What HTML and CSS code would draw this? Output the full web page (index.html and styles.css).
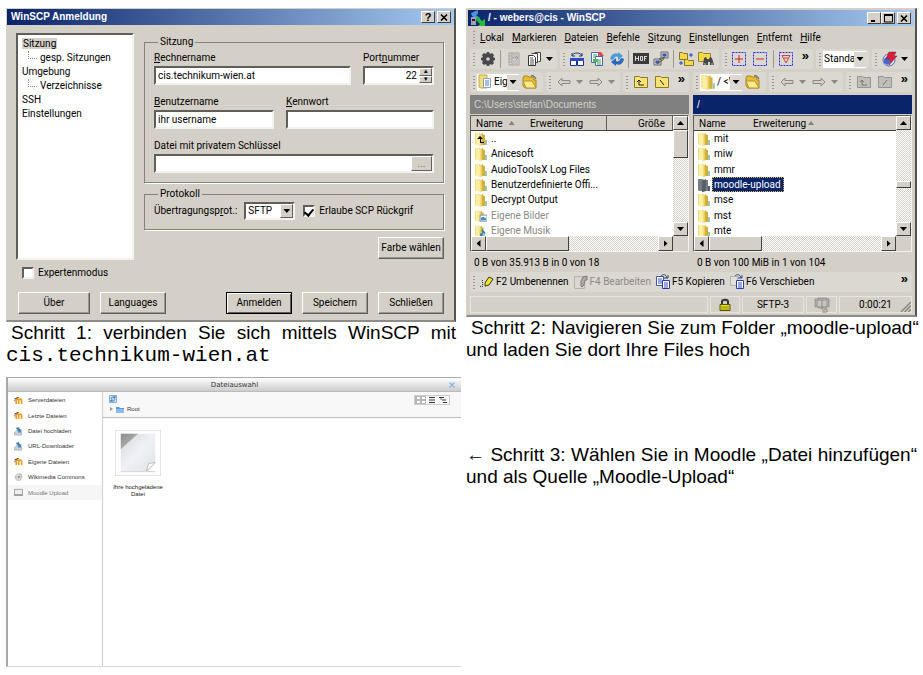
FILE: index.html
```
<!DOCTYPE html>
<html lang="de">
<head>
<meta charset="utf-8">
<title>WinSCP und Moodle-Upload</title>
<link rel="stylesheet" href="styles.css">
</head>
<body>
<svg class="defs" aria-hidden="true">
  <defs>
    <linearGradient id="gold" x1="0" x2="1"><stop offset="0" stop-color="#fdf3b4"/><stop offset=".6" stop-color="#ecd05e"/><stop offset="1" stop-color="#c9a63c"/></linearGradient>
    <linearGradient id="paper" x1="0" y1="0" x2="1" y2="1"><stop offset="0" stop-color="#d5d8de"/><stop offset=".5" stop-color="#eff1f5"/><stop offset="1" stop-color="#dde1e9"/></linearGradient>
    <linearGradient id="fold" x1="0" y1="0" x2="1" y2="1"><stop offset="0" stop-color="#8c8c8c"/><stop offset="1" stop-color="#c4c4c4"/></linearGradient>
  </defs>
  <symbol id="folder" viewBox="0 0 12 14"><path d="M0 1h5l1 1h3v11H1L0 12z" fill="#f3dd78"/><path d="M1 1h3v12H1z" fill="#fbeea6"/><path d="M4 3l4-2v12l-3 1H4z" fill="url(#gold)"/><path d="M8 3h2v10H8z" fill="#cfae3c"/><path d="M10 8h2v5h-2z" fill="#9cc9a8"/></symbol>
  <symbol id="folder-sel" viewBox="0 0 12 14"><path d="M0 1h5l1 1h4v11H1L0 12z" fill="#777d80"/><path d="M4 3l4-2v12l-3 1H4z" fill="#586168"/><path d="M10 8h2v5h-2z" fill="#426380"/></symbol>
  <symbol id="up" viewBox="0 0 12 14"><use href="#folder"/><path d="M5 4l3 3H6v3h3v1H5V7H2z" fill="#000"/></symbol>
  <symbol id="pics" viewBox="0 0 14 14"><use href="#folder" width="12" height="14"/><path d="M6 6h8v7H6z" fill="#fff" stroke="#789"/><path d="M7 9l3-1 3 2v2H7z" fill="#3a8fc8"/></symbol>
  <symbol id="music" viewBox="0 0 14 14"><use href="#folder" width="12" height="14"/><path d="M8 4c1 3 5 3 4 7-1-2-2-2-3-2v4H6v-3h2z" fill="#1d7fd8"/></symbol>
  <symbol id="gear" viewBox="0 0 16 16"><path d="M7 1h2l1 2 2-1 2 2-1 2 2 1v2l-2 1 1 2-2 2-2-1-1 2H7l-1-2-2 1-2-2 1-2-2-1V7l2-1-1-2 2-2 2 1z" fill="#484848"/><circle cx="8" cy="8" r="1.800" fill="#d8d4cc"/></symbol>
  <symbol id="queue" viewBox="0 0 16 16"><path d="M3 2h10v12H3zM6 2v12M3 5h3M3 8h3M3 11h3" fill="none" stroke="#a5a29c"/><path d="M7 4h5M7 6h5M7 10h5M7 12h5" stroke="#aaa"/><path d="M6 7h6l-2-2M12 7l-2 2" fill="none" stroke="#999"/></symbol>
  <symbol id="docs" viewBox="0 0 16 16"><path d="M7.500 1.500h6v9h-2" fill="#fff" stroke="#444"/><path d="M4.500 2.500h6v9h-2" fill="#fff" stroke="#444"/><path d="M1.500 4.500h5l2 2v8h-7z" fill="#fff" stroke="#333"/><path d="M3 7h3M3 9h4M3 11h4M3 13h4" stroke="#555"/></symbol>
  <symbol id="sync-win" viewBox="0 0 16 16"><path d="M1.500 8.500h6v6h-6zM8.500 8.500h6v6h-6z" fill="#fff" stroke="#1d2f86"/><path d="M1 7h7v3H1zM8 7h7v3H8z" fill="#2b4bc8"/><path d="M3 5c1-4 9-4 10 0M3 2v3h3M13 2v3h-3" fill="none" stroke="#26346e"/></symbol>
  <symbol id="compare" viewBox="0 0 16 16"><path d="M2.500 1.500h7v10h-7z" fill="#fff" stroke="#456fa8"/><path d="M6.500 5.500h7v9h-7z" fill="#fff" stroke="#4463a8"/><path d="M4 4h4M4 6h2M8 9h4M8 11h4M8 13h4" stroke="#3b9a52"/><path d="M8 1h4l3 4h-4z" fill="#e3434c"/><path d="M4 8h5v3H4z" fill="#4cb75c"/></symbol>
  <symbol id="refresh" viewBox="0 0 16 16"><path d="M1 8c1-5 5-7 8-5V1l5 4-5 4V6C7 5 5 6 5 8l-2 1z" fill="#4b9bdc"/><path d="M15 8c-1 5-5 7-8 5v2l-5-4 5-4v3c2 1 4 0 4-2l2-1z" fill="#2869bc"/></symbol>
  <symbol id="console" viewBox="0 0 16 16"><path d="M0 2h16v11H0z" fill="#3b3b3b"/><path d="M2.500 5v5M2 7.500h4M5.500 5v5M7.500 5.500h2v4h-2zM11.500 5v5M11 5.500h3M11 7.500h2" fill="none" stroke="#ddd"/></symbol>
  <symbol id="putty" viewBox="0 0 16 16"><path d="M8 1h7v6H8zM1 8h7v6H1z" fill="#d8d8d8" stroke="#67676f"/><path d="M9.500 2.500h4v3h-4zM2.500 9.500h4v3h-4z" fill="#3b55a8"/><path d="M12 6L6 8l3 1-5 4 7-5-2-1z" fill="#f5de26" stroke="#665"/></symbol>
  <symbol id="folders-sync" viewBox="0 0 16 16"><path d="M1.500 1.500h3l1 1h4v6h-8zM6.500 8.500h3l1 1h5v5h-9z" fill="#f3d84c" stroke="#8b7426"/><path d="M11 4h4M13 2v4M1 12h4M3 10v4" stroke="#2746b8"/></symbol>
  <symbol id="find" viewBox="0 0 16 16"><path d="M.5 1.500h4l1 1h7v8H.5z" fill="#f3d84c" stroke="#9b842c"/><path d="M6 7l2-1 1 2h2l1-2 2 1 2 7h-4v-3h-2v3H5z" fill="#484848"/><path d="M6 13h2M13 13h2" stroke="#bbb"/></symbol>
  <symbol id="sel-add" viewBox="0 0 16 16"><path d="M1.500 1.500h13v13h-13z" fill="none" stroke="#2b2bd8" stroke-dasharray="2 1"/><path d="M4 8h8M8 4v8" stroke="#c22"/></symbol>
  <symbol id="sel-sub" viewBox="0 0 16 16"><path d="M1.500 1.500h13v13h-13z" fill="none" stroke="#2b2bd8" stroke-dasharray="2 1"/><path d="M4 8h8" stroke="#c22"/></symbol>
  <symbol id="sel-filter" viewBox="0 0 16 16"><path d="M1.500 1.500h13v13h-13z" fill="none" stroke="#2b2bd8" stroke-dasharray="2 1"/><path d="M4 4.500h8L8 12zM6 7h4" fill="none" stroke="#c44"/></symbol>
  <symbol id="globe" viewBox="0 0 16 16"><circle cx="7" cy="9" r="6" fill="#d5dcec" stroke="#5f6fb0"/><path d="M2 8l4-3 3 4-3 5-4-2z" fill="#4469c8"/><path d="M7 1h7l-2 4h3l-8 9 2-6H4z" fill="#d6213c" stroke="#8c1730" stroke-width=".5"/></symbol>
  <symbol id="open" viewBox="0 0 16 16"><path d="M1 4l1-2h4l1 1h5v3h2v8H3L1 12z" fill="#e4bd35" stroke="#a6872c"/><path d="M1 7h9l4 7H4z" fill="#fbe98b" stroke="#b5932e"/><path d="M9 2c3-1 4 1 5 3" fill="none" stroke="#444"/></symbol>
  <symbol id="arrow-l" viewBox="0 0 16 16"><path d="M2 8l4-4v2.500h8v3H6V12z" fill="#d4d0c8" stroke="#8d8a84"/></symbol>
  <symbol id="arrow-r" viewBox="0 0 16 16"><path d="M14 8l-4-4v2.500H2v3h8V12z" fill="#d4d0c8" stroke="#8d8a84"/></symbol>
  <symbol id="parent" viewBox="0 0 16 16"><path d="M1.500 2.500h5l1 1h7v10h-13z" fill="#f7e273" stroke="#8e762d"/><path d="M6 6l-2 2M6 6l2 2M6 6v5h5" fill="none" stroke="#222"/></symbol>
  <symbol id="root" viewBox="0 0 16 16"><path d="M1.500 2.500h5l1 1h7v10h-13z" fill="#f7e273" stroke="#8e762d"/><path d="M6 6l4 5" fill="none" stroke="#222"/></symbol>
  <symbol id="parent-off" viewBox="0 0 16 16"><path d="M1.500 2.500h5l1 1h7v10h-13z" fill="#c0beb9" stroke="#96938d"/><path d="M6 6l-2 2M6 6l2 2M6 6v5h5" fill="none" stroke="#777"/></symbol>
  <symbol id="root-off" viewBox="0 0 16 16"><path d="M1.500 2.500h5l1 1h7v10h-13z" fill="#c0beb9" stroke="#96938d"/><path d="M10 6l-4 5" fill="none" stroke="#777"/></symbol>
  <symbol id="docfolder" viewBox="0 0 14 16"><path d="M1 1h8v13H3L1 13z" fill="#f3da7a" stroke="#c8a545"/><path d="M5.500 4.500h7v9h-7z" fill="#f4f8fc" stroke="#8ba6c4"/><path d="M7 7h4M7 9h4M7 11h4" stroke="#5b8bbd"/></symbol>
  <symbol id="pencil" viewBox="0 0 16 16"><path d="M6 9l4-6 4 2-4 6-4 1z" fill="#f5e529" stroke="#33331a"/><path d="M3.500 6v8M1 12.500h2" stroke="#333" stroke-dasharray="1 1"/></symbol>
  <symbol id="edit-off" viewBox="0 0 16 16"><path d="M1.500 2.500h10v12h-10z" fill="#d9d6d0" stroke="#b5b2ac"/><path d="M8 12l0-5 2-4 4-1v4h-2l-1 5-2 2z" fill="#b0ada7" stroke="#7d7a75"/></symbol>
  <symbol id="copy" viewBox="0 0 16 16"><path d="M1.500 2.500h7v9h-7z" fill="#fff" stroke="#4055a5"/><path d="M7.500 6.500h7v8h-7z" fill="#fff" stroke="#2c3cae"/><path d="M3 5h4M3 7h4M3 9h4M9 9h4M9 11h4M9 13h4" stroke="#3550b5"/><path d="M6 2c2-2 5-2 6 2M9 4h4V1" fill="none" stroke="#26497c"/></symbol>
  <symbol id="move" viewBox="0 0 16 16"><path d="M1.500 2.500h7v9h-7z" fill="#e3e1dc" stroke="#888" stroke-dasharray="1 1"/><path d="M7.500 6.500h7v8h-7z" fill="#fff" stroke="#2c3cae"/><path d="M9 9h4M9 11h4M9 13h4" stroke="#3550b5"/><path d="M6 2c2-2 5-2 6 2M9 4h4V1" fill="none" stroke="#26497c"/></symbol>
  <symbol id="lock" viewBox="0 0 12 14"><path d="M3 7V4c0-3 6-3 6 0v3" fill="none" stroke="#333" stroke-width="2"/><path d="M1 6.500h10v6H1z" fill="#e8e11d" stroke="#55520f"/><path d="M2 9h8M2 11h8" stroke="#8e8a14"/></symbol>
  <symbol id="zip" viewBox="0 0 16 16"><path d="M1 2h3V1h9v1h2v8h-3v1H4v-1H1z" fill="#aaa8a3" stroke="#83817c" stroke-width=".6"/><path d="M4 4h8v5H4z" fill="#c9c6c0"/><path d="M8 3v8c0 3 3 3 3 1h2v3H8" fill="none" stroke="#8a8883"/></symbol>
  <symbol id="winscp" viewBox="0 0 16 16"><path d="M1 3l7-3v4L6 5l4 3v3L2 6z" fill="#4c94dd"/><path d="M1 7h5v8H1z" fill="#9aa4b0"/><path d="M2 9h3v2H2z" fill="#405"/><path d="M7 6l5 5 3-2v7H8l2-2-4-4z" fill="#25ba37"/></symbol>
  <symbol id="moodle" viewBox="0 0 10 10"><path d="M0 3l4-2 2 1-4 2z" fill="#4a4a4a"/><path d="M1 4v2" stroke="#555"/><path d="M2.500 9V4.500c0-1.500 2.800-1.500 2.800 0V9M5.300 5c0-2 3.200-2 3.200 0v4" fill="none" stroke="#f09a1c" stroke-width="1.800"/></symbol>
  <symbol id="upload" viewBox="0 0 10 10"><path d="M1.500 6l1-2h5l1 2v3H.5V6z" fill="#cdd3da" stroke="#8794a3" stroke-width=".6"/><path d="M2 1l3-1 2 3 1-1v4H4l1-1z" fill="#4583b8"/></symbol>
  <symbol id="commons" viewBox="0 0 10 10"><path d="M3 1h5l1 3-2 4H3L1 5z" fill="#d3d3d3" stroke="#999" stroke-width=".6"/><path d="M4 3l3 1-2 3z" fill="#8d8d8d"/><path d="M2 2l4 1M3 7l4-1" stroke="#fff" stroke-width=".7"/></symbol>
  <symbol id="drive" viewBox="0 0 10 10"><path d="M.5 1.500h9v6h-9z" fill="#eee" stroke="#999"/><path d="M0 8h10" stroke="#777"/></symbol>
</svg>

<main class="page">
  <section class="step">
    <div class="window login">
      <header class="titlebar">
        <h2>WinSCP Anmeldung</h2>
        <button class="cap" aria-label="Hilfe">?</button>
        <button class="cap close" aria-label="Schließen"><svg viewBox="0 0 9 9"><path d="M1 1.500l6 6M7 1.500l-6 6" stroke="#000" stroke-width="1.600"/></svg></button>
      </header>
      <form class="login-body">
        <div class="login-main">
          <ul class="tree">
            <li><span class="active">Sitzung</span></li>
            <li class="sub">gesp. Sitzungen</li>
            <li>Umgebung</li>
            <li class="sub">Verzeichnisse</li>
            <li>SSH</li>
            <li>Einstellungen</li>
          </ul>
          <div class="settings">
            <fieldset class="session">
              <legend>Sitzung</legend>
              <div class="fields">
                <div class="field grow"><label for="host"><u>R</u>echnername</label><input id="host" type="text" value="cis.technikum-wien.at"></div>
                <div class="field port"><label for="port">Port<u>n</u>ummer</label>
                  <div class="sunken"><input id="port" type="text" value="22"><span class="spin"><button type="button" aria-label="Mehr">▴</button><button type="button" aria-label="Weniger">▾</button></span></div>
                </div>
              </div>
              <div class="fields">
                <div class="field grow"><label for="user"><u>B</u>enutzername</label><input id="user" type="text" value="ihr username"></div>
                <div class="field pass"><label for="pass"><u>K</u>ennwort</label><input id="pass" type="password"></div>
              </div>
              <div class="fields">
                <div class="field grow"><label for="key">Datei mit privatem Schlüssel</label>
                  <div class="sunken"><input id="key" type="text"><button class="browse" type="button">...</button></div>
                </div>
              </div>
            </fieldset>
            <fieldset class="protocol">
              <legend>Protokoll</legend>
              <div class="proto-row">
                <label for="proto">Übertragungsp<u>r</u>ot.:</label>
                <span class="drop"><select id="proto"><option>SFTP</option></select><i></i></span>
                <input type="checkbox" id="scp" checked><label for="scp">Erlaube SCP Rückgrif</label>
              </div>
            </fieldset>
            <button class="btn color" type="button">Farbe wählen</button>
          </div>
        </div>
        <div class="expert"><input type="checkbox" id="expert"><label for="expert">Expertenmodus</label></div>
        <div class="actions">
          <button class="btn wide" type="button">Über</button>
          <button class="btn" type="button">Languages</button>
          <button class="btn default" type="button">Anmelden</button>
          <button class="btn" type="button">Speichern</button>
          <button class="btn" type="button">Schließen</button>
        </div>
      </form>
    </div>
    <p class="caption spread">Schritt 1: verbinden Sie sich mittels WinSCP mit <code>cis.technikum-wien.at</code></p>
  </section>

  <section class="step">
    <div class="window commander">
      <header class="titlebar">
        <svg class="ic"><use href="#winscp"/></svg>
        <h2>/ - webers@cis - WinSCP</h2>
        <button class="cap" aria-label="Minimieren"><svg viewBox="0 0 9 9"><path d="M1 7h4" stroke="#000" stroke-width="2"/></svg></button>
        <button class="cap" aria-label="Maximieren"><svg viewBox="0 0 9 9"><path d="M.5 1h8v7h-8z" fill="none" stroke="#000"/><path d="M0 1h9" stroke="#000" stroke-width="2"/></svg></button>
        <button class="cap close" aria-label="Schließen"><svg viewBox="0 0 9 9"><path d="M1 1.500l6 6M7 1.500l-6 6" stroke="#000" stroke-width="1.600"/></svg></button>
      </header>
      <nav class="menu">
        <i class="grip"></i>
        <a href="#"><u>L</u>okal</a><a href="#"><u>M</u>arkieren</a><a href="#"><u>D</u>ateien</a><a href="#"><u>B</u>efehle</a><a href="#"><u>S</u>itzung</a><a href="#"><u>E</u>instellungen</a><a href="#"><u>E</u>ntfernt</a><a href="#"><u>H</u>ilfe</a>
      </nav>
      <div class="bar">
        <div class="group">
          <i class="grip"></i>
          <button class="tool"><svg class="ic"><use href="#gear"/></svg></button><i class="sep"></i>
          <button class="tool"><svg class="ic"><use href="#queue"/></svg></button>
          <button class="tool"><svg class="ic"><use href="#docs"/></svg></button><i class="tri"></i>
        </div>
        <div class="group grow">
          <i class="grip"></i>
          <button class="tool"><svg class="ic"><use href="#sync-win"/></svg></button>
          <button class="tool"><svg class="ic"><use href="#compare"/></svg></button>
          <button class="tool"><svg class="ic"><use href="#refresh"/></svg></button><i class="sep"></i>
          <button class="tool"><svg class="ic"><use href="#console"/></svg></button>
          <button class="tool"><svg class="ic"><use href="#putty"/></svg></button><i class="sep"></i>
          <button class="tool"><svg class="ic"><use href="#folders-sync"/></svg></button>
          <button class="tool"><svg class="ic"><use href="#find"/></svg></button>
        </div>
        <div class="group">
          <i class="grip"></i>
          <button class="tool"><svg class="ic"><use href="#sel-add"/></svg></button>
          <button class="tool"><svg class="ic"><use href="#sel-sub"/></svg></button><i class="sep"></i>
          <button class="tool"><svg class="ic"><use href="#sel-filter"/></svg></button>
          <span class="more">»</span>
        </div>
        <div class="group">
          <i class="grip"></i>
          <span class="combo preset"><select aria-label="Übertragungseinstellungen"><option>Standard</option></select><i></i></span>
        </div>
        <div class="group">
          <i class="grip"></i>
          <button class="tool"><svg class="ic"><use href="#globe"/></svg></button><i class="tri"></i>
        </div>
      </div>
      <div class="bar second">
        <div class="half">
          <div class="group">
            <i class="grip"></i>
            <span class="combo"><svg class="ic"><use href="#docfolder"/></svg><select aria-label="Lokales Verzeichnis"><option>Eigene Dokumente</option></select><i></i></span>
            <button class="tool"><svg class="ic"><use href="#open"/></svg></button>
          </div>
          <div class="group">
            <i class="grip"></i>
            <button class="tool"><svg class="ic"><use href="#arrow-l"/></svg></button><i class="tri off"></i>
            <button class="tool"><svg class="ic"><use href="#arrow-r"/></svg></button><i class="tri off"></i>
          </div>
          <div class="group grow">
            <i class="grip"></i>
            <button class="tool"><svg class="ic"><use href="#parent"/></svg></button>
            <button class="tool"><svg class="ic"><use href="#root"/></svg></button>
            <span class="more">»</span>
          </div>
        </div>
        <div class="half">
          <div class="group">
            <i class="grip"></i>
            <span class="combo"><svg class="ic"><use href="#folder"/></svg><select aria-label="Entferntes Verzeichnis"><option>/ &lt;Wurzel&gt;</option></select><i></i></span>
            <button class="tool"><svg class="ic"><use href="#open"/></svg></button>
          </div>
          <div class="group">
            <i class="grip"></i>
            <button class="tool"><svg class="ic"><use href="#arrow-l"/></svg></button><i class="tri off"></i>
            <button class="tool"><svg class="ic"><use href="#arrow-r"/></svg></button><i class="tri off"></i>
          </div>
          <div class="group grow">
            <i class="grip"></i>
            <button class="tool"><svg class="ic"><use href="#parent-off"/></svg></button>
            <button class="tool"><svg class="ic"><use href="#root-off"/></svg></button>
            <span class="more">»</span>
          </div>
        </div>
      </div>
      <div class="panels">
        <div class="panel">
          <div class="path">C:\Users\stefan\Documents</div>
          <div class="list">
            <div class="head"><span class="c-name">Name <i class="sort"></i></span><span class="c-ext">Erweiterung</span><span class="c-size">Größe</span></div>
            <ul class="rows">
              <li><svg class="fi"><use href="#up"/></svg><span>..</span></li>
              <li><svg class="fi"><use href="#folder"/></svg><span>Anicesoft</span></li>
              <li><svg class="fi"><use href="#folder"/></svg><span>AudioToolsX Log Files</span></li>
              <li><svg class="fi"><use href="#folder"/></svg><span>Benutzerdefinierte Offi...</span></li>
              <li><svg class="fi"><use href="#folder"/></svg><span>Decrypt Output</span></li>
              <li class="dim"><svg class="fi"><use href="#pics"/></svg><span>Eigene Bilder</span></li>
              <li class="dim"><svg class="fi"><use href="#music"/></svg><span>Eigene Musik</span></li>
            </ul>
            <div class="vbar"><i class="sb up"></i><i class="thumb tall"></i><i class="sb down"></i></div>
            <div class="hbar"><i class="sb left"></i><i class="thumb long"></i><i class="sb right"></i></div>
          </div>
          <div class="info">0 B von 35.913 B in 0 von 18</div>
        </div>
        <div class="panel remote">
          <div class="path">/</div>
          <div class="list">
            <div class="head"><span class="c-name">Name</span><span class="c-ext">Erweiterung <i class="sort"></i></span></div>
            <ul class="rows">
              <li><svg class="fi"><use href="#folder"/></svg><span>mit</span></li>
              <li><svg class="fi"><use href="#folder"/></svg><span>miw</span></li>
              <li><svg class="fi"><use href="#folder"/></svg><span>mmr</span></li>
              <li class="selected"><svg class="fi"><use href="#folder-sel"/></svg><span>moodle-upload</span></li>
              <li><svg class="fi"><use href="#folder"/></svg><span>mse</span></li>
              <li><svg class="fi"><use href="#folder"/></svg><span>mst</span></li>
              <li><svg class="fi"><use href="#folder"/></svg><span>mte</span></li>
            </ul>
            <div class="vbar"><i class="sb up"></i><i class="thumb mid"></i><i class="sb down"></i></div>
            <div class="hbar"><i class="sb left"></i><i class="thumb short"></i><i class="sb right"></i></div>
          </div>
          <div class="info">0 B von 100 MiB in 1 von 104</div>
        </div>
      </div>
      <div class="keys">
        <i class="grip"></i>
        <button><svg class="ic"><use href="#pencil"/></svg>F2 Umbenennen</button>
        <button class="dim"><svg class="ic"><use href="#edit-off"/></svg>F4 Bearbeiten</button>
        <button><svg class="ic"><use href="#copy"/></svg>F5 Kopieren</button>
        <button><svg class="ic"><use href="#move"/></svg>F6 Verschieben</button>
        <span class="more">»</span>
      </div>
      <footer class="status">
        <span class="grow"></span>
        <span class="s-lock"><svg class="lock"><use href="#lock"/></svg></span>
        <span class="s-proto">SFTP-3</span>
        <span class="s-zip"><svg class="ic"><use href="#zip"/></svg></span>
        <span class="s-time">0:00:21<svg class="resize" viewBox="0 0 12 12"><path d="M1 12L12 1M5 12l7-7M9 12l3-3" stroke="#85827b" stroke-width="1.500"/></svg></span>
      </footer>
    </div>
    <p class="caption indent">Schritt 2: Navigieren Sie zum Folder „moodle-upload“<br>und laden Sie dort Ihre Files hoch</p>
  </section>

  <section class="picker">
    <header class="picker-title"><h2>Dateiauswahl</h2><button aria-label="Schließen"><svg viewBox="0 0 6 6"><path d="M.5.5l5 5M5.500.5l-5 5" stroke="#86b2e6" stroke-width="1.200"/></svg></button></header>
    <div class="picker-body">
      <nav class="sources">
        <a href="#"><svg><use href="#moodle"/></svg>Serverdateien</a>
        <a href="#"><svg><use href="#moodle"/></svg>Letzte Dateien</a>
        <a href="#"><svg><use href="#upload"/></svg>Datei hochladen</a>
        <a href="#"><svg><use href="#upload"/></svg>URL-Downloader</a>
        <a href="#"><svg><use href="#moodle"/></svg>Eigene Dateien</a>
        <a href="#"><svg><use href="#commons"/></svg>Wikimedia Commons</a>
        <a href="#" class="current"><svg><use href="#drive"/></svg>Moodle Upload</a>
      </nav>
      <div class="files">
        <div class="files-bar">
          <div>
            <svg class="reload" viewBox="0 0 8 8"><path d="M.5.5h7v7h-7z" fill="#d8e8f6" stroke="#7fb0d8"/><path d="M2 4c0-2 3-3 4-1M6 4c0 2-3 3-4 1M6 1v2H4M2 7V5h2" fill="none" stroke="#2c78ba"/></svg>
            <div class="crumb"><svg viewBox="0 0 4 4"><path d="M1 0l3 2-3 2z" fill="#999"/></svg><svg class="bluefolder" viewBox="0 0 8 7"><path d="M0 1h3l1 1h4v5H0z" fill="#5b95da"/><path d="M0 3h8v4H0z" fill="#8dbbee"/></svg>Root</div>
          </div>
          <div class="views">
            <button class="on" aria-label="Symbole"><svg viewBox="0 0 10 8"><path d="M1 1h3v2H1zM6 1h3v2H6zM1 5h3v2H1zM6 5h3v2H6z" fill="#fff"/></svg></button>
            <button aria-label="Liste"><svg viewBox="0 0 10 8"><path d="M2 1.500h6M2 4h6M2 6.500h6" stroke="#333"/></svg></button>
            <button aria-label="Baum"><svg viewBox="0 0 10 8"><path d="M1 1.500h5M4 4h4M5 6.500h4" stroke="#333"/><path d="M3 2v2" stroke="#777"/></svg></button>
          </div>
        </div>
        <figure class="file">
          <svg viewBox="0 0 46 46"><path d="M5 42.500h36" stroke="#c9c9c9"/><path d="M5 3h36v31l-8 8H5z" fill="url(#paper)"/><path d="M5 3h18L5 19z" fill="url(#fold)"/><path d="M32 42l2-8 7-1z" fill="#fff" stroke="#bbb"/></svg>
          <figcaption>Ihre hochgeladene Datei</figcaption>
        </figure>
      </div>
    </div>
  </section>

  <p class="caption third">← Schritt 3: Wählen Sie in Moodle „Datei hinzufügen“ und als Quelle „Moodle-Upload“</p>
</main>
</body>
</html>
```
FILE: styles.css
```
* { box-sizing: border-box; }
body { margin: 0; background: #fff; color: #000; font-family: "Liberation Sans", Arial, sans-serif; }
h2, p, ul, figure, fieldset { margin: 0; padding: 0; }
ul { list-style: none; }
button, input, select { font: inherit; color: inherit; margin: 0; padding: 0; border-radius: 0; }
button { background: none; border: 0; display: inline-flex; align-items: center; justify-content: center; white-space: nowrap; }
a { color: inherit; text-decoration: none; }
i { display: block; flex: none; }
svg { display: block; flex: none; }
.defs { width: 0; height: 0; position: absolute; }
.grow { flex: 1; min-width: 0; }

.page { display: grid; grid-template-columns: 450fr 451fr; column-gap: 10px; padding: 8px 6px; }
.step { min-width: 0; }

.caption { font-size: 19px; line-height: 22px; text-align: justify; }
.caption code { font-family: "Liberation Mono", monospace; font-size: 21px; line-height: 22px; }
.spread, .indent { text-indent: 5px; }
.indent { text-align: left; white-space: nowrap; }

/* Classic Windows frame */
.window { background: #d4d0c8; border: 1px solid #d4d0c8; border-right: 2px solid #55534f; border-bottom: 2px solid #8f8c87; font-family: Roboto, sans-serif; font-size: 10px; line-height: 14px; }
.titlebar { display: flex; align-items: center; height: 16px; padding: 0 3px 0 4px; background: linear-gradient(90deg, #0a246a, #a6caf0); color: #fff; }
.titlebar h2 { flex: 1; font: bold 10px/16px "Liberation Sans", sans-serif; }
.cap { width: 14px; height: 12px; background: #d4d0c8; color: #000; border: 1px solid; border-color: #fff #404040 #404040 #fff; font: bold 11px/10px "Liberation Sans", sans-serif; }
.cap.close { margin-left: 2px; }
.cap svg { width: 9px; height: 9px; }

/* Login dialog */
.login-body { padding: 8px 10px 6px 9px; }
.login-main { display: flex; gap: 10px; }
.tree { width: 118px; height: 227px; padding: 2px 4px; background: #fff; border: 2px solid; border-color: #605e5a #f4f2ee #f4f2ee #605e5a; }
.tree .active { background: #d4d0c8; padding: 0 1px; }
.tree .sub { display: flex; align-items: center; gap: 3px; padding-left: 6px; }
.tree .sub::before { content: ""; width: 8px; height: 7px; margin-bottom: 6px; border: dotted #888; border-width: 0 0 1px 1px; }
.settings { flex: 1; min-width: 0; display: flex; flex-direction: column; padding-top: 2px; }
fieldset { min-width: 0; border: 1px solid #85827c; box-shadow: 1px 1px 0 #fff; }
legend { margin-left: 4px; padding: 0 2px; }
.session { padding: 2px 9px 9px; }
.protocol { margin-top: 4px; padding: 1px 9px 9px; }
.fields { display: flex; gap: 12px; }
.fields + .fields { margin-top: 10px; }
.field { display: flex; flex-direction: column; gap: 1px; }
.port { width: 71px; }
.pass { width: 148px; }
.field > input, .sunken { width: 100%; height: 19px; background: #fff; border: 2px solid; border-color: #605e5a #f4f2ee #f4f2ee #605e5a; }
.field input { padding: 0 2px; outline: 0; }
.sunken { display: flex; }
.sunken input { flex: 1; min-width: 0; width: 0; border: 0; }
.port input { text-align: right; }
.spin { display: flex; flex-direction: column; width: 13px; }
.spin button { flex: 1; height: 7px; overflow: hidden; font-size: 7px; line-height: 7px; background: #d4d0c8; border: 1px solid; border-color: #fff #606060 #606060 #fff; }
.browse { width: 21px; color: #77746e; background: #d4d0c8; border: 1px solid; border-color: #fff #606060 #606060 #fff; }
.proto-row { display: flex; align-items: center; height: 18px; white-space: nowrap; }
.drop { display: grid; width: 51px; height: 18px; margin: 0 8px 0 7px; border: 2px solid; border-color: #605e5a #f4f2ee #f4f2ee #605e5a; background: #fff; }
.drop select, .drop i { grid-area: 1 / 1; }
.drop select { appearance: none; border: 0; background: none; padding-left: 2px; }
.drop i { justify-self: end; display: grid; place-items: center; width: 13px; background: #d4d0c8; border: 1px solid; border-color: #fff #606060 #606060 #fff; pointer-events: none; }
.drop i::before, .combo i::before { content: ""; width: 7px; height: 4px; background: #000; clip-path: polygon(0 0, 100% 0, 50% 100%); }
input[type="checkbox"] { appearance: none; flex: none; width: 12px; height: 12px; background: #fff; border: 2px solid; border-color: #605e5a #f4f2ee #f4f2ee #605e5a; }
input[type="checkbox"] + label { margin-left: 4px; }
input[type="checkbox"]:checked { display: grid; place-items: center; }
input[type="checkbox"]:checked::before { content: ""; width: 4px; height: 7px; border: solid #000; border-width: 0 2px 2px 0; transform: rotate(40deg); }
.btn { height: 22px; width: 66px; background: #d4d0c8; border: 1px solid; border-color: #fff #605e5a #605e5a #fff; box-shadow: inset -1px -1px 0 #9a978f; }
.color { align-self: flex-end; margin-top: 7px; }
.expert { display: flex; align-items: center; margin: 6px 0 12px 6px; }
.actions { display: flex; gap: 10px; padding-left: 2px; }
.wide { width: 72px; }
.default { margin-left: auto; border-color: #000; box-shadow: inset 1px 1px 0 #fff, inset -1px -1px 0 #605e5a; }

/* Commander window */
.commander { padding: 1px; }
.ic { width: 16px; height: 16px; }
.commander .titlebar { padding-left: 2px; }
.commander .titlebar h2 { padding-left: 2px; }
.menu { display: flex; align-items: center; gap: 8px; height: 23px; padding-left: 5px; }
.menu .grip { margin-right: -3px; }
.grip { width: 2px; height: 13px; background: repeating-linear-gradient(#9a978f 0 1px, transparent 1px 3px); }
.bar { display: flex; gap: 3px; padding: 0 2px; height: 20px; }
.second { margin-top: 3px; gap: 4px; }
.half { flex: 1; min-width: 0; display: flex; gap: 3px; }
.group { display: flex; align-items: center; padding: 0 3px; background: #dbd8d1; border-radius: 3px; }
.group .grip { margin-right: 2px; }
.tool { width: 21px; height: 18px; }
.sep { width: 1px; height: 18px; background: #9a978f; margin: 0 2px; }
.tri { width: 7px; height: 4px; margin: 0 1px; background: #000; clip-path: polygon(0 0, 100% 0, 50% 100%); }
.tri.off { background: #888; margin: 0 2px; }
.more { align-self: flex-start; margin-left: auto; padding: 0 1px 0 5px; font: bold 13px/13px "Liberation Sans", sans-serif; }
.combo { display: flex; align-items: center; width: 42px; height: 17px; background: #fff; }
.combo select { flex: 1; min-width: 0; width: 0; appearance: none; border: 0; background: none; padding-left: 1px; text-overflow: clip; }
.combo i { display: grid; place-items: center; width: 12px; height: 15px; background: #dbd8d1; }
.combo.preset { width: 43px; }

.panels { display: grid; grid-template-columns: 1fr 1fr; gap: 4px; padding: 3px 2px 0; }
.panel { min-width: 0; }
.path { height: 19px; line-height: 19px; padding-left: 4px; font-family: "Liberation Sans", sans-serif; background: #808080; color: #d4d0c8; }
.remote .path { background: #0a246a; color: #fff; }
.list { display: grid; grid-template: 15px 105px 15px / 1fr 15px; margin-top: 1px; border: 1px solid; border-color: #605e5a #f4f2ee #f4f2ee #605e5a; background: #fff; }
.head { display: flex; background: #d4d0c8; border-bottom: 1px solid #404040; line-height: 15px; }
.head span { padding-left: 5px; display: flex; align-items: center; gap: 6px; }
.c-name { width: 54px; }
.c-ext { flex: 1; }
.c-size { width: 67px; justify-content: flex-end; padding-right: 7px; border: solid #605e5a; border-width: 0 1px; }
.remote .head .c-ext { gap: 2px; }
.sort { width: 6px; height: 4px; background: #85827c; clip-path: polygon(50% 0, 100% 100%, 0 100%); }
.rows { display: grid; grid-template-rows: repeat(7, 1fr); height: 108px; padding-left: 4px; }
.rows li { display: flex; align-items: center; gap: 2px; white-space: nowrap; }
.rows li span { padding: 0 3px 0 2px; }
.rows .selected span { background: #0a246a; color: #fff; outline: 1px dotted #d8b848; outline-offset: -1px; line-height: 15px; }
.fi { width: 12px; height: 14px; }
.dim { color: #8b8984; }
.vbar, .hbar { display: flex; background: repeating-conic-gradient(#d4d0c8 0 25%, #fff 0 50%) 0 0 / 2px 2px; }
.vbar { flex-direction: column; grid-area: 1 / 2 / 3 / 3; }
.hbar { grid-area: 3 / 1; z-index: 1; }
.list::after { content: ""; grid-area: 3 / 2; background: #d4d0c8; }
.sb, .thumb { background: #d4d0c8; border: 1px solid; border-color: #fff #404040 #404040 #fff; }
.sb { width: 15px; height: 14px; display: grid; place-items: center; }
.sb::before { content: ""; width: 7px; height: 4px; background: #000; clip-path: polygon(50% 0, 100% 100%, 0 100%); }
.sb.down { margin-top: auto; }
.sb.down::before { clip-path: polygon(0 0, 100% 0, 50% 100%); }
.sb.left::before, .sb.right::before { width: 4px; height: 7px; clip-path: polygon(100% 0, 100% 100%, 0 50%); }
.sb.right::before { clip-path: polygon(0 0, 100% 50%, 0 100%); }
.sb.left, .sb.right { height: 15px; }
.sb.right { margin-left: auto; }
.tall { height: 28px; }
.mid { height: 7px; margin-top: 51px; }
.long { width: 83px; }
.short { width: 53px; }
.info { padding: 4px 4px 2px; }
.keys { display: flex; align-items: center; height: 20px; margin: 0 2px; padding-left: 3px; background: #dbd8d1; border-radius: 3px; }
.keys button { gap: 1px; margin-left: 4px; }
.keys .more { padding-right: 4px; }
.status { display: flex; gap: 2px; height: 17px; margin: 4px 2px 1px; }
.status > span { display: flex; align-items: center; justify-content: center; border: 1px solid #e8e6e1; }
.s-lock { width: 30px; }
.s-proto { width: 62px; }
.s-zip { width: 31px; }
.s-time { width: 73px; position: relative; }
.lock { width: 12px; height: 14px; }
.resize { position: absolute; right: 0; bottom: 0; width: 11px; height: 11px; }

/* Moodle file picker */
.picker { height: 290px; margin: 10px -5px 0 0; display: flex; flex-direction: column; background: #fff; border: solid #a8a8a8; border-width: 1px 0 1px 2px; border-bottom-color: #d8d8d8; font-size: 6px; line-height: 8px; color: #333; }
.picker-title { display: flex; align-items: center; height: 14px; padding: 0 6px 0 12px; background: linear-gradient(#fff, #ccc); border-bottom: 1px solid #bbb; }
.picker-title h2 { flex: 1; text-align: center; font: 7px/12px "DejaVu Sans", sans-serif; }
.picker-title svg { width: 6px; height: 6px; }
.picker-body { flex: 1; display: flex; }
.sources { display: grid; grid-template-rows: repeat(7, 1fr); width: 94px; height: 108px; }
.sources a { display: flex; align-items: center; gap: 5px; padding: 1px 0 0 6px; }
.sources svg { width: 9px; height: 9px; }
.sources .current { background: #f6f6f6; color: #777; }
.files { flex: 1; min-width: 0; border-left: 1px solid #ccc; }
.files-bar { display: flex; justify-content: space-between; height: 26px; padding: 3px 11px 0 6px; background: #f8f8f8; border-bottom: 1px solid #bbb; }
.reload { width: 8px; height: 8px; }
.crumb { display: flex; align-items: center; gap: 3px; margin-top: 2px; }
.crumb svg { width: 4px; height: 4px; }
.crumb .bluefolder { width: 8px; height: 7px; }
.views { display: flex; width: 36px; height: 10px; border: 1px solid #ccc; }
.views button { flex: 1; }
.views .on { background: #b5b5b5; }
.views svg { width: 10px; height: 8px; }
.file { width: 56px; margin: 12px 0 0 7px; text-align: center; color: #222; }
.file svg { width: 46px; height: 46px; margin: 0 auto 8px; border: 1px solid #e4e4e4; }
.file figcaption { line-height: 7px; }

.third { margin: 77px 0 0 0; }
```
